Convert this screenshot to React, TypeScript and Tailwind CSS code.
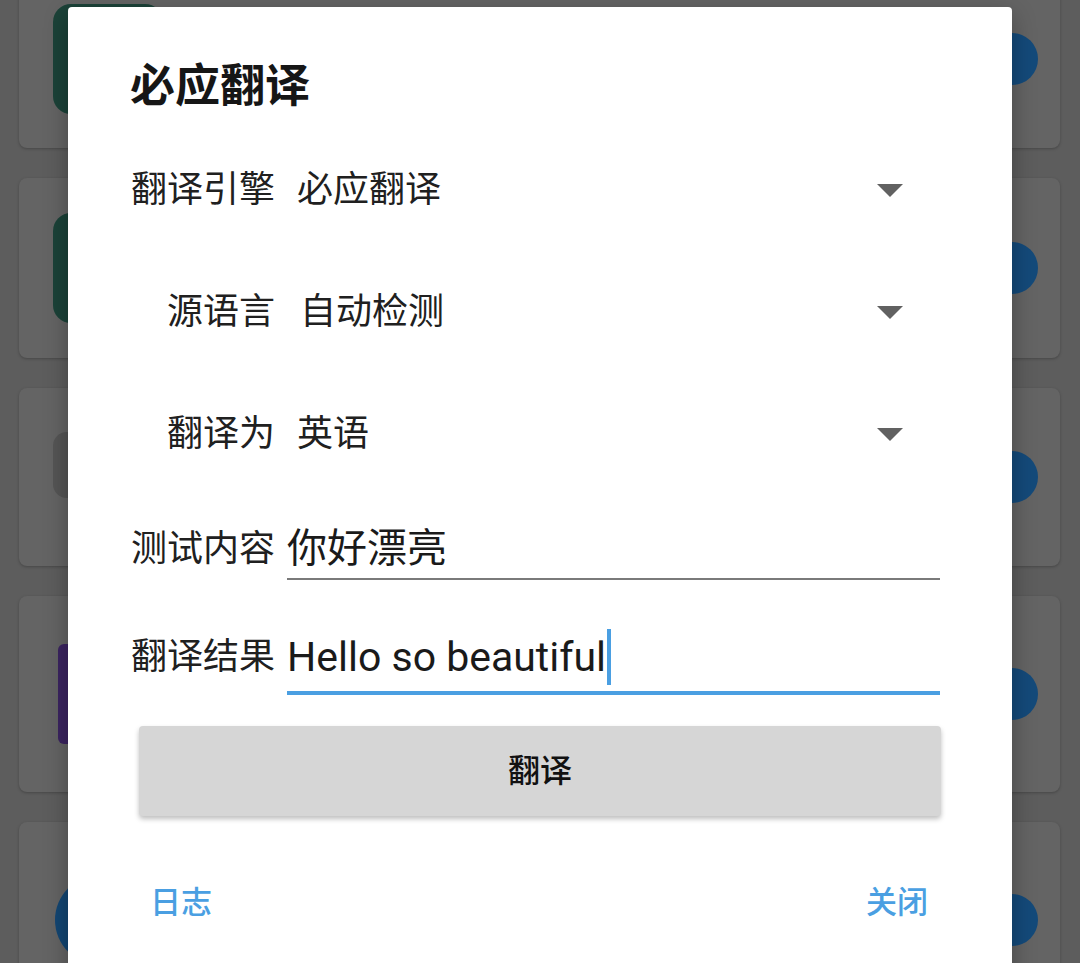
import React from "react";

const cards = [
  { h: "h-[179px]", icon: "w-[110px] h-[110px] rounded-[18px] bg-[#1b4238]" },
  { h: "h-[180px]", icon: "w-[110px] h-[110px] rounded-[18px] bg-[#1b4238]" },
  { h: "h-[178px]", icon: "w-[110px] h-[66px] rounded-[14px] bg-[#555555] -mt-[24px]" },
  { h: "h-[196px]", icon: "w-[100px] h-[100px] rounded-[6px] bg-[#3b2460] ml-[5px]" },
  { h: "h-[196px]", icon: "w-[90px] h-[90px] rounded-full bg-[#134673] ml-[2px]" },
];

const Arrow = () => (
  <svg width="26" height="13" viewBox="0 0 26 13" className="mr-[37px] shrink-0">
    <polygon points="0,0 26,0 13,13" fill="#616161" />
  </svg>
);

const SelectRow = ({ label, value, shift }: { label: string; value: string; shift?: string }) => (
  <div className="flex items-center h-[122px]">
    <div className="w-[145px] text-right text-[36px] leading-[48px] text-[#202020] shrink-0">{label}</div>
    <div className={"flex-1 text-[36px] leading-[48px] text-[#202020] " + (shift ?? "ml-[22px]")}>{value}</div>
    <Arrow />
  </div>
);

export default function App() {
  return (
    <div
      className="relative w-[1080px] h-[963px] overflow-hidden bg-[#5d5d5d]"
      style={{ fontFamily: "Roboto, 'Noto Sans CJK SC', sans-serif" }}
    >
      {/* dimmed list behind the dialog */}
      <div className="flex flex-col gap-[30px] pl-[19px] pr-[20px] -mt-[31px]">
        {cards.map((c, i) => (
          <div
            key={i}
            className={`${c.h} flex items-center justify-between pl-[34px] pr-[22px] rounded-[8px] bg-[#646464] shadow-[0_1px_3px_rgba(0,0,0,0.25)]`}
          >
            <div className={c.icon} />
            <div className="w-[52px] h-[52px] rounded-full bg-[#144a7a]" />
          </div>
        ))}
      </div>

      {/* dialog */}
      <div className="absolute left-[68px] top-[7px] w-[944px] h-[970px] bg-white rounded-[4px] shadow-[0_8px_24px_rgba(0,0,0,0.3)]">
        <div className="pl-[62px] pr-[72px]">
          <div className="mt-[50px] h-[60px] flex items-center text-[45px] font-bold text-[#161616]">必应翻译</div>

          <div className="mt-[12px]">
            <SelectRow label="翻译引擎" value="必应翻译" />
            <SelectRow label="源语言" value="自动检测" shift="ml-[25px]" />
            <SelectRow label="翻译为" value="英语" />
          </div>

          <div className="mt-[30px] flex items-start">
            <div className="w-[145px] text-right text-[36px] leading-[48px] text-[#202020] shrink-0">测试内容</div>
            <div className="ml-[12px] flex-1 border-b-2 border-[#7a7a7a] pb-[5px]">
              <span className="text-[40px] leading-[48px] text-[#1a1a1a] block">你好漂亮</span>
            </div>
          </div>

          <div className="mt-[49px] flex items-start">
            <div className="mt-[4px] w-[145px] text-right text-[36px] leading-[48px] text-[#202020] shrink-0">翻译结果</div>
            <div className="ml-[12px] flex-1 border-b-4 border-[#4a9fe2] pb-[6px] flex items-center">
              <span className="text-[41px] leading-[48px] text-[#1a1a1a]">Hello so beautiful</span>
              <span className="w-[4px] h-[56px] bg-[#4a9fe2] ml-[1px]" />
            </div>
          </div>

          <button className="mt-[31px] ml-[9px] w-[802px] h-[90px] rounded-[4px] bg-[#d6d6d6] shadow-[0_3px_5px_rgba(0,0,0,0.25)] text-[32px] font-medium text-[#111]">
            翻译
          </button>
        </div>

        <div className="mt-[67px] pl-[82px] pr-[84px] flex justify-between text-[31px] leading-[40px] font-medium text-[#4a9fe2]">
          <span>日志</span>
          <span>关闭</span>
        </div>
      </div>
    </div>
  );
}
